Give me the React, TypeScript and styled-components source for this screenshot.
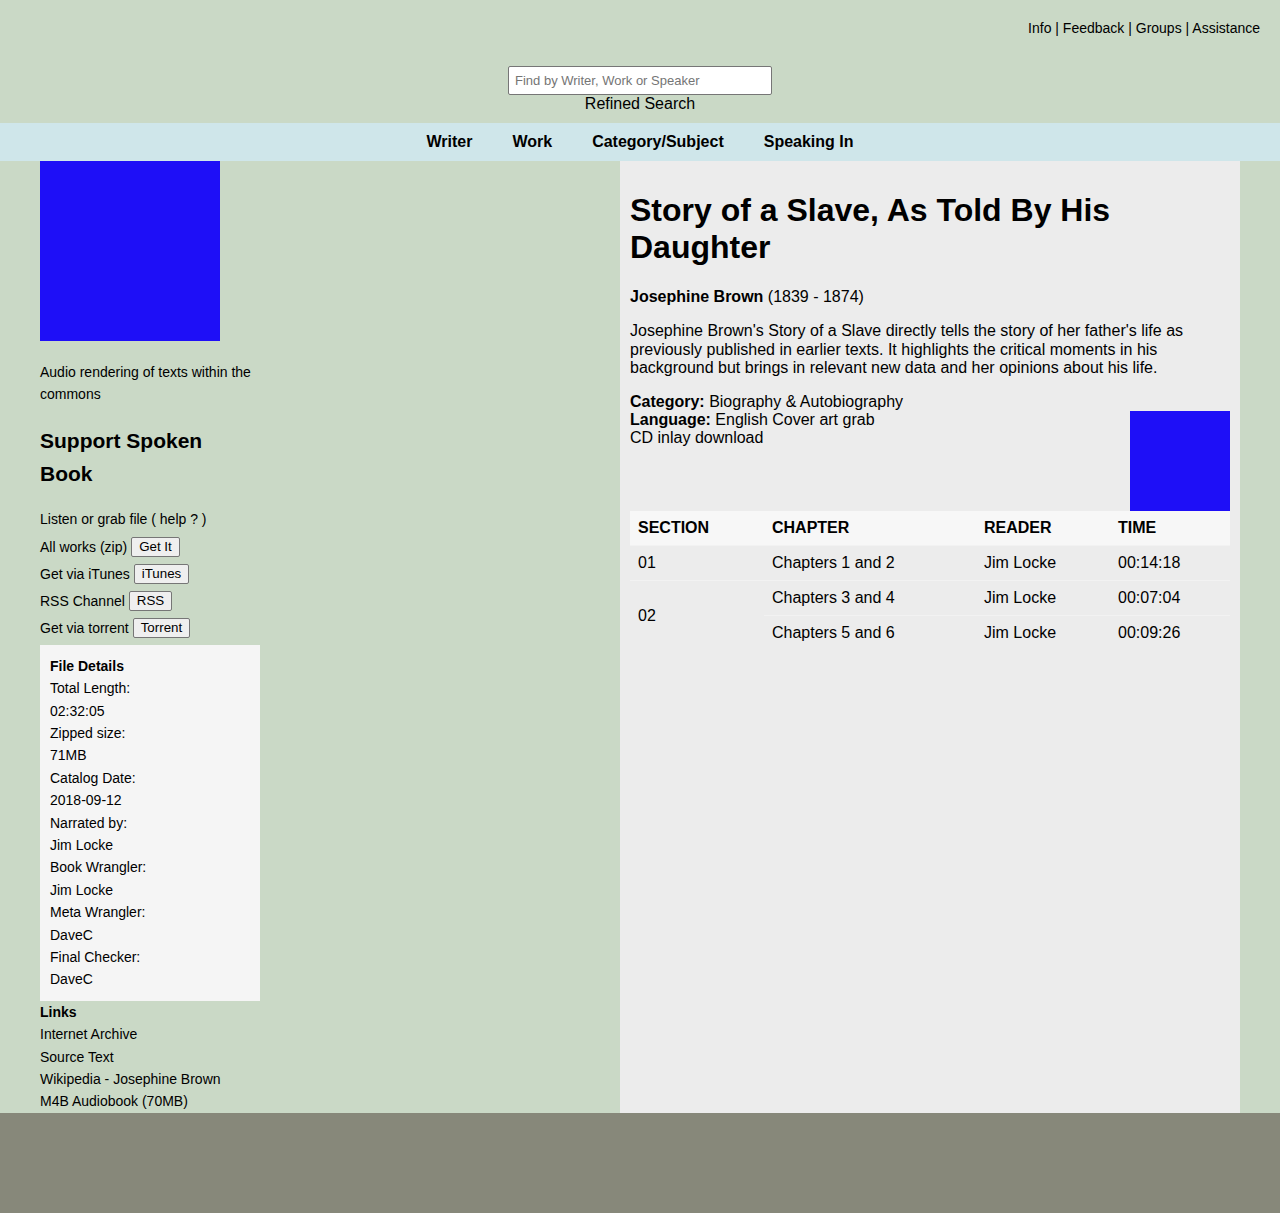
import React from 'react';
import styled, { createGlobalStyle } from 'styled-components';

const GlobalStyle = createGlobalStyle`
	body {
		margin: 0;
		background: #cad9c6;
		font-family: "Liberation Sans", Arial, sans-serif;
		color: #000;
	}
`;

const Page = styled.div`
	width: 1280px;
	background: #cad9c6;
`;

const Header = styled.header`
	padding-top: 20px;
`;

const TopLinks = styled.div`
	text-align: right;
	padding-right: 20px;
	font-size: 14px;
	line-height: 16px;
`;

const SearchForm = styled.form`
	margin-top: 30px;
	display: flex;
	flex-direction: column;
	align-items: center;
`;

const SearchInput = styled.input`
	box-sizing: border-box;
	width: 264px;
	height: 29px;
	padding: 2px 6px;
	border: 1px solid #767676;
	border-radius: 2px;
	font-family: "Liberation Sans", Arial, sans-serif;
	font-size: 13px;
	background: #fff;
	&::placeholder {
		color: #757575;
	}
`;

const RefinedSearch = styled.div`
	font-size: 16px;
	line-height: 18.4px;
`;

const Nav = styled.nav`
	margin-top: 9.6px;
	height: 38px;
	background: #cfe6ea;
	display: flex;
	justify-content: center;
	align-items: center;
	gap: 40px;
	font-size: 16px;
	font-weight: bold;
`;

const Main = styled.main`
	display: flex;
	padding: 0 40px;
`;

const LeftColumn = styled.aside`
	width: 220px;
	font-size: 14px;
	line-height: 22.4px;
`;

const Cover = styled.div<{ $size: number }>`
	width: ${p => p.$size}px;
	height: ${p => p.$size}px;
	background: #1e0ff7;
`;

const FloatCover = styled(Cover)`
	float: right;
`;

const Tagline = styled.p`
	margin: 20px 0 0;
`;

const SupportHeading = styled.h3`
	margin: 18px 0;
	max-width: 200px;
	font-size: 21px;
	line-height: 33px;
`;

const Plain = styled.div``;

const ButtonRows = styled.div`
	margin-top: 3px;
`;

const ButtonRow = styled.div`
	height: 27px;
	display: flex;
	align-items: center;
	gap: 4px;
`;

const SmallButton = styled.button`
	box-sizing: border-box;
	height: 20px;
	padding: 0 7px;
	font-family: "Liberation Sans", Arial, sans-serif;
	font-size: 13.33px;
	background: #efefef;
	border: 1px solid #767676;
	border-radius: 2px;
	color: #000;
`;

const DetailsBox = styled.div`
	margin-top: 3.5px;
	background: #f5f5f5;
	padding: 10px;
`;

const Bold = styled.div`
	font-weight: bold;
`;

const Panel = styled.section`
	box-sizing: border-box;
	width: 620px;
	margin-left: auto;
	background: #ececec;
	padding: 10px;
	font-size: 16px;
	line-height: 18.4px;
`;

const Title = styled.h1`
	margin: 21.4px 0;
	font-size: 32px;
	line-height: 37px;
`;

const Para = styled.p`
	margin: 16px 0;
`;

const Meta = styled.div`
	margin-top: 14px;
	line-height: 18px;
`;

const Table = styled.table`
	clear: both;
	width: 100%;
	table-layout: fixed;
	border-collapse: collapse;
	text-align: left;
`;

const Th = styled.th<{ $w: number }>`
	box-sizing: border-box;
	width: ${p => p.$w}px;
	padding: 8px;
	background: #f7f7f7;
	line-height: 18px;
`;

const Td = styled.td`
	padding: 8px;
	border-top: 1px solid #f2f2f2;
	vertical-align: middle;
	line-height: 18px;
`;

const Footer = styled.footer`
	height: 100px;
	background: #87887a;
`;

const details = [
	'Total Length:', '02:32:05',
	'Zipped size:', '71MB',
	'Catalog Date:', '2018-09-12',
	'Narrated by:', 'Jim Locke',
	'Book Wrangler:', 'Jim Locke',
	'Meta Wrangler:', 'DaveC',
	'Final Checker:', 'DaveC',
];

const links = ['Internet Archive', 'Source Text', 'Wikipedia - Josephine Brown', 'M4B Audiobook (70MB)'];

const App = () => (
	<Page>
		<GlobalStyle />
		<Header>
			<TopLinks>Info | Feedback | Groups | Assistance</TopLinks>
			<SearchForm onSubmit={e => e.preventDefault()}>
				<SearchInput placeholder="Find by Writer, Work or Speaker" />
				<RefinedSearch>Refined Search</RefinedSearch>
			</SearchForm>
			<Nav>
				<span>Writer</span>
				<span>Work</span>
				<span>Category/Subject</span>
				<span>Speaking In</span>
			</Nav>
		</Header>
		<Main>
			<LeftColumn>
				<Cover $size={180} />
				<Tagline>Audio rendering of texts within the commons</Tagline>
				<SupportHeading>Support Spoken Book</SupportHeading>
				<Plain>Listen or grab file ( help ? )</Plain>
				<ButtonRows>
					<ButtonRow>All works (zip) <SmallButton>Get It</SmallButton></ButtonRow>
					<ButtonRow>Get via iTunes <SmallButton>iTunes</SmallButton></ButtonRow>
					<ButtonRow>RSS Channel <SmallButton>RSS</SmallButton></ButtonRow>
					<ButtonRow>Get via torrent <SmallButton>Torrent</SmallButton></ButtonRow>
				</ButtonRows>
				<DetailsBox>
					<Bold>File Details</Bold>
					{details.map((d, i) => <Plain key={i}>{d}</Plain>)}
				</DetailsBox>
				<Bold>Links</Bold>
				{links.map(l => <Plain key={l}>{l}</Plain>)}
			</LeftColumn>
			<Panel>
				<Title>Story of a Slave, As Told By His Daughter</Title>
				<Para><b>Josephine Brown</b> (1839 - 1874)</Para>
				<Para>
					Josephine Brown's Story of a Slave directly tells the story of her father's life as
					previously published in earlier texts. It highlights the critical moments in his
					background but brings in relevant new data and her opinions about his life.
				</Para>
				<Meta>
					<b>Category:</b> Biography &amp; Autobiography<br />
					<b>Language:</b> English <FloatCover $size={100} />Cover art grab<br />
					CD inlay download
				</Meta>
				<Table>
					<thead>
						<tr>
							<Th $w={134}>SECTION</Th>
							<Th $w={212}>CHAPTER</Th>
							<Th $w={134}>READER</Th>
							<Th $w={120}>TIME</Th>
						</tr>
					</thead>
					<tbody>
						<tr>
							<Td>01</Td>
							<Td>Chapters 1 and 2</Td>
							<Td>Jim Locke</Td>
							<Td>00:14:18</Td>
						</tr>
						<tr>
							<Td rowSpan={2}>02</Td>
							<Td>Chapters 3 and 4</Td>
							<Td>Jim Locke</Td>
							<Td>00:07:04</Td>
						</tr>
						<tr>
							<Td>Chapters 5 and 6</Td>
							<Td>Jim Locke</Td>
							<Td>00:09:26</Td>
						</tr>
					</tbody>
				</Table>
			</Panel>
		</Main>
		<Footer />
	</Page>
);

export default App;
